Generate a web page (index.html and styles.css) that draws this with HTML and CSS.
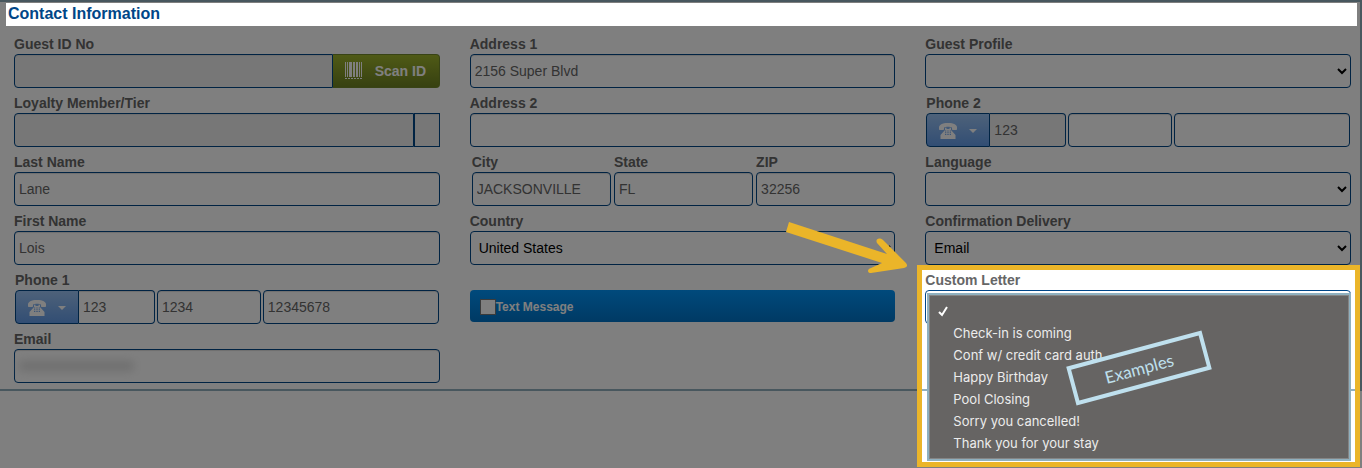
FILE: index.html
```html
<!DOCTYPE html>
<html lang="en">
<head>
  <meta charset="UTF-8" />
  <title>Contact Information</title>
  <link rel="stylesheet" href="styles.css">
</head>
<body>

<svg class="sprite" aria-hidden="true">
  <symbol id="icon-phone" viewBox="0 0 18 16">
    <path d="M0 6V4.500C0 2 3 0 9 0s9 2 9 4.500V6c0 .6-.4 1-1 1h-3c-.6 0-1-.4-1-1V4.500C12 4 10.500 3.700 9 3.700S6 4 5 4.500V6c0 .6-.4 1-1 1H1C.4 7 0 6.600 0 6z"/>
    <path fill-rule="evenodd" d="M6 4.800h1.500V6h3V4.800H12V7l4.500 5v4h-15v-4L6 7zM6 7.500v1h1.300v-1zm2.300 0v1h1.400v-1zm2.400 0v1H12v-1zM6 9.300v1h1.300v-1zm2.300 0v1h1.400v-1zm2.400 0v1H12v-1zM6 11v1h1.300v-1zm2.300 0v1h1.400v-1zm2.400 0v1H12v-1z"/>
  </symbol>
</svg>

<form class="panel">
  <h1 class="title">Contact Information</h1>

  <div class="columns">
    <div class="column">
      <div class="field">
        <label for="guestId">Guest ID No</label>
        <div class="joined">
          <input id="guestId" class="readonly" type="text" readonly>
          <button type="button" class="scan">
            <svg width="17" height="18" viewBox="0 0 17 18" aria-hidden="true">
              <path d="M0 0h1v15H0zM2 0h1v15H2zM4 0h1v15H4zM5 0h2v15H5zM8 0h2v15H8zM11 0h1v15h-1zM12 0h1v15h-1zM14 0h1v15h-1zM16 0h1v15h-1zM0 16h2v1H0zM3 16h2v1H3zM6 16h2v1H6zM9 16h2v1H9zM12 16h2v1h-2zM15 16h2v1h-2z"/>
            </svg>
            Scan ID
          </button>
        </div>
      </div>
      <div class="field">
        <label for="loyalty">Loyalty Member/Tier</label>
        <div class="joined">
          <input id="loyalty" class="readonly" type="text" readonly>
          <input class="readonly tier" type="text" aria-label="Tier" readonly>
        </div>
      </div>
      <div class="field">
        <label for="lastName">Last Name</label>
        <input id="lastName" type="text" value="Lane">
      </div>
      <div class="field">
        <label for="firstName">First Name</label>
        <input id="firstName" type="text" value="Lois">
      </div>
      <div class="field phone">
        <label for="phone1">Phone 1</label>
        <div class="phone-row">
          <div class="joined code">
            <button type="button" class="phone-type" aria-label="Phone type">
              <svg class="handset" aria-hidden="true"><use href="#icon-phone"/></svg>
              <span class="caret"></span>
            </button>
            <input id="phone1" type="text" value="123">
          </div>
          <input class="area" type="text" value="1234" aria-label="Area code">
          <input class="number" type="text" value="12345678" aria-label="Number">
        </div>
      </div>
      <div class="field redacted">
        <label for="email">Email</label>
        <input id="email" type="text">
      </div>
    </div>

    <div class="column">
      <div class="field">
        <label for="address1">Address 1</label>
        <input id="address1" type="text" value="2156 Super Blvd">
      </div>
      <div class="field">
        <label for="address2">Address 2</label>
        <input id="address2" type="text">
      </div>
      <div class="city-row">
        <div class="field">
          <label for="city">City</label>
          <input id="city" type="text" value="JACKSONVILLE">
        </div>
        <div class="field">
          <label for="state">State</label>
          <input id="state" type="text" value="FL">
        </div>
        <div class="field">
          <label for="zip">ZIP</label>
          <input id="zip" type="text" value="32256">
        </div>
      </div>
      <div class="field">
        <label for="country">Country</label>
        <select id="country"><option>United States</option></select>
      </div>
      <label class="text-message">
        <input type="checkbox">Text Message
      </label>
    </div>

    <div class="column">
      <div class="field">
        <label for="profile">Guest Profile</label>
        <select id="profile"><option></option></select>
      </div>
      <div class="field phone">
        <label for="phone2">Phone 2</label>
        <div class="phone-row">
          <div class="joined code">
            <button type="button" class="phone-type" aria-label="Phone type">
              <svg class="handset" aria-hidden="true"><use href="#icon-phone"/></svg>
              <span class="caret"></span>
            </button>
            <input id="phone2" class="readonly" type="text" value="123" readonly>
          </div>
          <input class="area" type="text" aria-label="Area code">
          <input class="number" type="text" aria-label="Number">
        </div>
      </div>
      <div class="field">
        <label for="language">Language</label>
        <select id="language"><option></option></select>
      </div>
      <div class="field">
        <label for="delivery">Confirmation Delivery</label>
        <select id="delivery"><option>Email</option></select>
      </div>
      <div class="field letter">
        <label for="letter">Custom Letter</label>
        <select id="letter"><option></option></select>

        <div class="spotlight"></div>
        <ul class="menu" role="listbox" aria-label="Custom Letter">
          <li role="option" aria-selected="true">
            <svg class="check" viewBox="0 0 10 10" aria-hidden="true"><path d="M1 6l3 3 5-8"/></svg>
          </li>
          <li role="option">Check-in is coming</li>
          <li role="option">Conf w/ credit card auth</li>
          <li role="option">Happy Birthday</li>
          <li role="option">Pool Closing</li>
          <li role="option">Sorry you cancelled!</li>
          <li role="option">Thank you for your stay</li>
        </ul>
        <div class="stamp">Examples</div>
        <svg class="arrow" viewBox="0 0 125 55" aria-hidden="true">
          <path d="M4 1L102 33L92 22C90 18 94 16 98 19L121 42Q124 46 119 47L86 52C82 52 82 48 86 47L97 42L1 11Z"/>
        </svg>
      </div>
    </div>
  </div>
</form>

</body>
</html>
```
FILE: styles.css
```css
* {
  box-sizing: border-box;
}

body {
  margin: 0;
  min-height: 100vh;
  background: #fff;
  color: #666;
  font-family: "Liberation Sans", Arial, sans-serif;
  font-size: 14px;
  overflow: hidden;
}

.sprite {
  display: none;
}

.panel {
  border: 2px solid #91afbd;
  border-left: 0;
  padding-bottom: 6px;
}

.title {
  position: relative;
  z-index: 3;
  margin: 1px 3px 8px 6px;
  padding: 0 0 2px 2px;
  background: #fff;
  color: #004687;
  font-size: 16px;
  line-height: 21px;
}

.columns {
  display: flex;
  gap: 30px;
  padding: 0 9px 0 14px;
}

.column {
  flex: 1 1 0;
  min-width: 0;
  display: flex;
  flex-direction: column;
  gap: 5px;
}

.field {
  position: relative;
  flex: 1;
  min-width: 0;
}

.column > .field,
.city-row {
  flex: none;
}

.field label {
  display: block;
  font-weight: bold;
  line-height: 20px;
}

input[type="text"],
select {
  display: block;
  width: 100%;
  min-width: 0;
  height: 34px;
  border: 1px solid #004687;
  border-radius: 4px;
  background-color: #fff;
  color: #666;
  font: inherit;
}

input[type="text"] {
  padding: 0 4px;
  box-shadow: inset 0 1px 1px #ddd;
}

select {
  padding: 0 4px;
  color: #000;
}

input.readonly {
  background-color: #eee;
}

.joined,
.phone-row,
.city-row {
  display: flex;
}

.joined > input:first-child {
  border-radius: 4px 0 0 4px;
}

input.tier {
  flex: none;
  width: 26px;
  border-radius: 0;
}

.scan {
  flex: none;
  display: flex;
  align-items: center;
  gap: 13px;
  width: 107px;
  height: 34px;
  padding: 0 12px;
  border: 1px solid #71872a;
  border-left: 0;
  border-radius: 0 4px 4px 0;
  background: linear-gradient(#9fb42c, #6e8222);
  color: #fff;
  font: bold 14px "Liberation Sans", Arial, sans-serif;
}

.scan svg {
  flex: none;
  fill: #fff;
}

.phone {
  padding: 0 1px;
}

.phone-row {
  gap: 2px;
}

.code {
  flex: 140;
}

.phone-row .area {
  flex: 94;
}

.phone-row .number {
  flex: 166;
}

.code input[type="text"] {
  border-left: 0;
  border-radius: 0 4px 4px 0;
}

.phone-type {
  flex: none;
  display: flex;
  align-items: center;
  gap: 12px;
  width: 64px;
  height: 34px;
  padding: 2px 0 0 12px;
  border: 1px solid #004687;
  border-radius: 4px 0 0 4px;
  background: linear-gradient(#9cc4f4, #649ce8);
}

.handset {
  width: 18px;
  height: 16px;
  fill: #fff;
}

.caret {
  border: 4px solid transparent;
  border-top-color: #fff;
  border-bottom: 0;
}

/* hides the guest's address */
.redacted::after {
  content: "";
  position: absolute;
  left: 5px;
  top: 32px;
  width: 115px;
  height: 10px;
  background: #ddd;
  filter: blur(5px);
}

.city-row {
  gap: 3px;
  padding-left: 2px;
}

.text-message {
  display: flex;
  align-items: center;
  height: 32px;
  margin-top: 20px;
  padding: 2px 0 0 10px;
  border-radius: 4px;
  background: linear-gradient(#0094f8, #0074c8);
  color: #fff;
  font-size: 12px;
  font-weight: bold;
}

.text-message input {
  appearance: none;
  width: 16px;
  height: 16px;
  margin: 0;
  border: 1px solid #767676;
  background: #fff;
}

/* dims everything outside the custom letter field */
.spotlight {
  position: absolute;
  z-index: 2;
  top: -5px;
  left: -8px;
  right: -9px;
  height: 202px;
  border: 5px solid #ebb529;
  box-shadow: 0 0 0 9999px rgba(0, 0, 0, 0.5);
}

.menu {
  position: absolute;
  z-index: 4;
  top: 23px;
  left: 2px;
  right: 0;
  margin: 0;
  padding: 5px 0;
  border: 2px solid #8fb0bf;
  background: #666463;
  box-shadow: inset 0 0 0 1px #858585;
  color: #ececec;
  font: 13px/22px Inter, sans-serif;
  list-style: none;
}

.menu li {
  height: 22px;
  padding-left: 24px;
}

.check {
  display: block;
  width: 10px;
  height: 22px;
  margin-left: -15px;
  fill: none;
  stroke: #fff;
  stroke-width: 2;
}

.stamp {
  position: absolute;
  z-index: 5;
  top: 78px;
  left: 144px;
  width: 140px;
  padding-top: 2px;
  border: 4px solid #bfe0ee;
  color: #bfe0ee;
  font: 17px/30px Lato, sans-serif;
  text-align: center;
  transform: rotate(-15deg);
}

.arrow {
  position: absolute;
  z-index: 5;
  top: -49px;
  left: -140px;
  width: 125px;
  height: 55px;
  fill: #ebb529;
}
```
